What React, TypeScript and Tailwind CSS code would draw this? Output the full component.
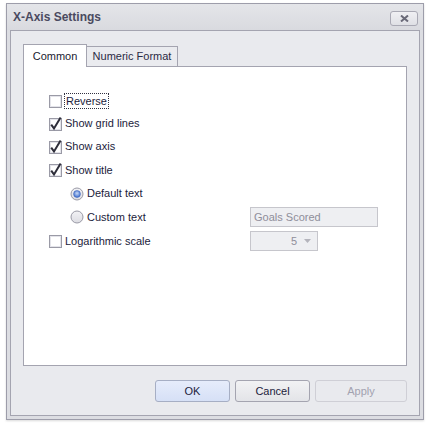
import React from "react";

const font = { fontFamily: '"Liberation Sans", Arial, sans-serif' };

function CheckBox({ checked }: { checked: boolean }) {
  return (
    <svg width="16" height="16" viewBox="0 0 16 16" className="shrink-0">
      <rect x="1.5" y="2.5" width="12" height="12" fill="#ffffff" stroke="#9a9aa6" />
      <rect x="2.5" y="3.5" width="10" height="10" fill="none" stroke="#e4e4ea" />
      {checked && (
        <path d="M3.2 8.6 L6 12.4 L12.6 1.6" fill="none" stroke="#2e2e3a" strokeWidth="2" strokeLinejoin="miter" />
      )}
    </svg>
  );
}

function Radio({ checked }: { checked: boolean }) {
  return (
    <svg width="14" height="14" viewBox="0 0 14 14" className="shrink-0">
      <defs>
        <radialGradient id="rg" cx="50%" cy="40%" r="60%">
          <stop offset="0%" stopColor="#c6d7f5" />
          <stop offset="100%" stopColor="#3e6fd0" />
        </radialGradient>
        <linearGradient id="rb" x1="0" y1="0" x2="0" y2="1">
          <stop offset="0%" stopColor="#f2f2f5" />
          <stop offset="100%" stopColor="#dcdce2" />
        </linearGradient>
      </defs>
      <circle cx="7" cy="7" r="6" fill="url(#rb)" stroke="#9a9aa6" />
      {checked && <circle cx="7" cy="7" r="3.4" fill="url(#rg)" stroke="#3a62b8" strokeWidth="0.6" />}
    </svg>
  );
}

export default function App() {
  return (
    <div className="w-[430px] h-[428px] bg-white pt-[3px] pl-[6px]" style={font}>
      <div className="w-[418px] h-[417px] border border-[#9d9daa] bg-[#dcdde2] flex flex-col shadow-[0_1px_2px_rgba(0,0,0,0.15)]">
        <div className="h-[26px] flex items-center justify-between pl-[6px] pr-[5px] bg-gradient-to-b from-[#e4e5e9] to-[#d9dadf]">
          <span className="text-[12px] font-bold text-[#4a4a60] leading-none">X-Axis Settings</span>
          <div className="w-[28px] h-[15px] mt-[3px] rounded-[3px] border border-[#a9a9b4] bg-gradient-to-b from-[#f0f0f3] to-[#dfe0e5] flex items-center justify-center">
            <svg width="9" height="7" viewBox="0 0 9 7">
              <path d="M1 0.5 L8 6.5 M8 0.5 L1 6.5" stroke="#6a6a78" strokeWidth="2" />
            </svg>
          </div>
        </div>
        <div className="flex-1 mx-[3px] mb-[3px] border border-[#a4a4b0] bg-[#e9eaee] flex flex-col pt-[13px] px-[12px]">
          <div className="flex items-end h-[22px] relative z-10">
            <div className="w-[64px] h-[23px] -mb-px bg-white border border-b-0 border-[#a4a4b0] flex items-center justify-center text-[11px] text-[#1a1a30]">
              Common
            </div>
            <div className="w-[91px] h-[20px] bg-[#eaebef] border border-l-0 border-b-0 border-[#a4a4b0] flex items-center justify-center text-[11px] text-[#2a2a44]">
              Numeric Format
            </div>
          </div>
          <div className="w-[384px] h-[300px] bg-white border border-[#a4a4b0] pl-[24px] pt-[22px] flex flex-col text-[11px] text-[#1c1c3c]">
            <div className="h-[23px] flex items-center">
              <CheckBox checked={false} />
              <span className="border border-dotted border-[#303040] px-[1px] leading-[14px]">Reverse</span>
            </div>
            <div className="h-[23px] flex items-center gap-[1px]">
              <CheckBox checked />
              <span>Show grid lines</span>
            </div>
            <div className="h-[23px] flex items-center gap-[1px]">
              <CheckBox checked />
              <span>Show axis</span>
            </div>
            <div className="h-[24px] flex items-center gap-[1px]">
              <CheckBox checked />
              <span>Show title</span>
            </div>
            <div className="h-[23px] flex items-center gap-[3px] pl-[22px]">
              <Radio checked />
              <span>Default text</span>
            </div>
            <div className="h-[24px] flex items-center pl-[22px] pr-[28px]">
              <Radio checked={false} />
              <span className="ml-[3px]">Custom text</span>
              <div className="ml-auto w-[128px] h-[20px] border border-[#c6c6cc] bg-[#eeeff2] text-[#8e8e9a] flex items-center pl-[3px]">
                Goals Scored
              </div>
            </div>
            <div className="h-[24px] flex items-center gap-[1px] pr-[88px]">
              <CheckBox checked={false} />
              <span>Logarithmic scale</span>
              <div className="ml-auto w-[68px] h-[20px] border border-[#c6c6cc] bg-[#eeeff2] text-[#8e8e9a] flex items-center justify-end pr-[6px] gap-[7px]">
                <span>5</span>
                <svg width="7" height="4" viewBox="0 0 7 4">
                  <path d="M0 0 L7 0 L3.5 4 Z" fill="#b4b4bc" />
                </svg>
              </div>
            </div>
          </div>
          <div className="flex justify-end gap-[5px] mt-[14px] text-[11px]">
            <div className="w-[75px] h-[22px] rounded-[3px] border border-[#a6aec4] bg-gradient-to-b from-[#e6ecfb] to-[#d6e0f6] flex items-center justify-center text-[#1c1c3c]">
              OK
            </div>
            <div className="w-[75px] h-[22px] rounded-[3px] border border-[#a4a4b0] bg-gradient-to-b from-[#f2f2f4] to-[#e3e4e8] flex items-center justify-center text-[#1c1c3c]">
              Cancel
            </div>
            <div className="w-[92px] h-[22px] rounded-[3px] border border-[#cfcfd6] bg-[#e9eaee] flex items-center justify-center text-[#a2a2b0]">
              Apply
            </div>
          </div>
        </div>
      </div>
    </div>
  );
}
